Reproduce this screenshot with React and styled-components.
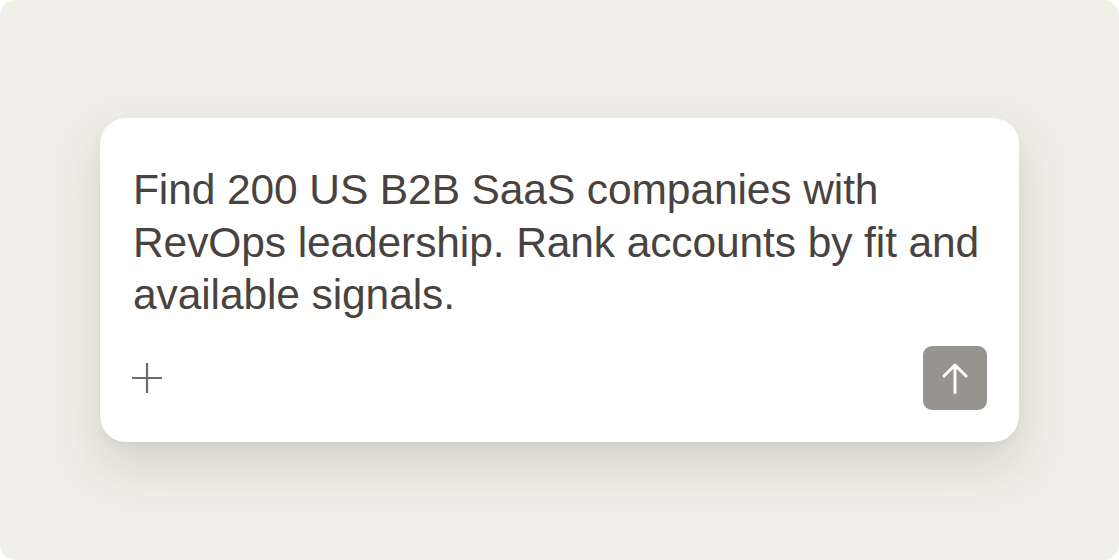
import React from 'react'
import styled, { createGlobalStyle } from 'styled-components'

const GlobalStyle = createGlobalStyle`
    html, body {
        margin: 0;
        padding: 0;
        background: #ffffff;
    }
    * {
        box-sizing: border-box;
    }
`

const Frame = styled.div`
    width: 1119px;
    height: 560px;
    border-radius: 16px;
    background: #efefe7;
    display: flex;
    align-items: center;
    justify-content: center;
`

const Composer = styled.div`
    width: 919px;
    height: 324px;
    background: #ffffff;
    border-radius: 26px;
    padding: 46px 32px 32px 33px;
    display: flex;
    flex-direction: column;
    justify-content: space-between;
    box-shadow: 0 22px 48px rgba(70, 70, 50, 0.17), 0 4px 10px rgba(70, 70, 50, 0.05);
`

const Prompt = styled.p`
    margin: 0;
    font-family: "Liberation Sans", Arial, sans-serif;
    font-size: 42.5px;
    line-height: 52.5px;
    letter-spacing: -0.1px;
    color: #48433f;
`

const Toolbar = styled.div`
    display: flex;
    align-items: center;
    justify-content: space-between;
`

const AttachButton = styled.button`
    width: 30px;
    height: 30px;
    margin-left: -1px;
    padding: 0;
    border: none;
    background: none;
    display: flex;
    align-items: center;
    justify-content: center;
    color: #6f6b67;
    cursor: pointer;
`

const SendButton = styled.button`
    width: 64px;
    height: 64px;
    padding: 0;
    border: none;
    border-radius: 9px;
    background: #97938f;
    color: #ffffff;
    display: flex;
    align-items: center;
    justify-content: center;
    cursor: pointer;
`

const PlusIcon = () => (
    <svg width="30" height="30" viewBox="0 0 30 30" fill="none">
        <path d="M0 15H30M15 0V30" stroke="currentColor" strokeWidth="2.2" />
    </svg>
)

const ArrowIcon = () => (
    <svg width="26" height="32" viewBox="0 0 26 32" fill="none">
        <path d="M13 30.5V3M2 14L13 3L24 14" stroke="currentColor" strokeWidth="3" strokeLinecap="round" strokeLinejoin="round" />
    </svg>
)

const App = () => {
    return (
        <>
            <GlobalStyle />
            <Frame>
                <Composer>
                    <Prompt>
                        Find 200 US B2B SaaS companies with RevOps leadership. Rank accounts by fit and available signals.
                    </Prompt>
                    <Toolbar>
                        <AttachButton aria-label="Attach">
                            <PlusIcon />
                        </AttachButton>
                        <SendButton aria-label="Send">
                            <ArrowIcon />
                        </SendButton>
                    </Toolbar>
                </Composer>
            </Frame>
        </>
    )
}

export default App
